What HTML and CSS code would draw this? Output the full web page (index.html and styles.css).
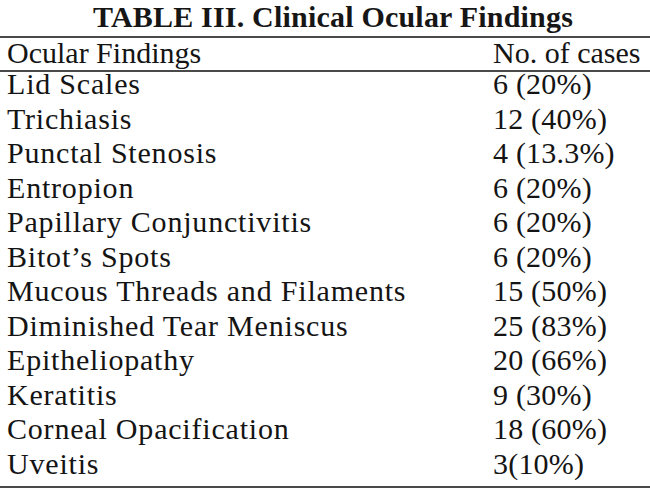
FILE: index.html
```html
<!DOCTYPE html>
<html>
<head>
<meta charset="utf-8">
<link rel="stylesheet" href="styles.css">
</head>
<body>
<div class="page">
  <h1 class="title">TABLE III. Clinical Ocular Findings</h1>
  <div class="rule"></div>
  <div class="row head"><span class="c1">Ocular Findings</span><span class="c2">No. of cases</span></div>
  <div class="rule"></div>
  <div class="body">
    <div class="row"><span class="c1">Lid Scales</span><span class="c2">6 (20%)</span></div>
    <div class="row"><span class="c1">Trichiasis</span><span class="c2">12 (40%)</span></div>
    <div class="row"><span class="c1">Punctal Stenosis</span><span class="c2">4 (13.3%)</span></div>
    <div class="row"><span class="c1">Entropion</span><span class="c2">6 (20%)</span></div>
    <div class="row"><span class="c1">Papillary Conjunctivitis</span><span class="c2">6 (20%)</span></div>
    <div class="row"><span class="c1">Bitot’s Spots</span><span class="c2">6 (20%)</span></div>
    <div class="row"><span class="c1">Mucous Threads and Filaments</span><span class="c2">15 (50%)</span></div>
    <div class="row"><span class="c1">Diminished Tear Meniscus</span><span class="c2">25 (83%)</span></div>
    <div class="row"><span class="c1">Epitheliopathy</span><span class="c2">20 (66%)</span></div>
    <div class="row"><span class="c1">Keratitis</span><span class="c2">9 (30%)</span></div>
    <div class="row"><span class="c1">Corneal Opacification</span><span class="c2">18 (60%)</span></div>
    <div class="row"><span class="c1">Uveitis</span><span class="c2">3(10%)</span></div>
  </div>
  <div class="rule"></div>
</div>
</body>
</html>
```

FILE: styles.css
```css
html, body {
  margin: 0;
  padding: 0;
  background: #ffffff;
}
.page {
  width: 650px;
  height: 497px;
  overflow: hidden;
  font-family: "Liberation Serif", "Times New Roman", serif;
  color: #141414;
  display: flex;
  flex-direction: column;
}
.title {
  margin: 0 0 2px 0;
  padding-left: 16px;
  font-size: 30px;
  line-height: 34px;
  font-weight: bold;
  letter-spacing: 0.2px;
  text-align: center;
  color: #161616;
}
.rule {
  flex: none;
  height: 2px;
  background: #4a4a4a;
}
.row {
  display: flex;
  font-size: 30px;
  line-height: 34.5px;
  padding-left: 7px;
}
.row .c1 {
  letter-spacing: 0.8px;
}
.row .c2 {
  letter-spacing: 0.2px;
}
.head {
  line-height: 30px;
  padding-bottom: 2px;
}
.head .c1,
.head .c2 {
  letter-spacing: 0;
}
.c1 {
  width: 486px;
  white-space: nowrap;
}
.c2 {
  white-space: nowrap;
}
.body {
  margin-top: -5px;
  margin-bottom: 5px;
}
```
